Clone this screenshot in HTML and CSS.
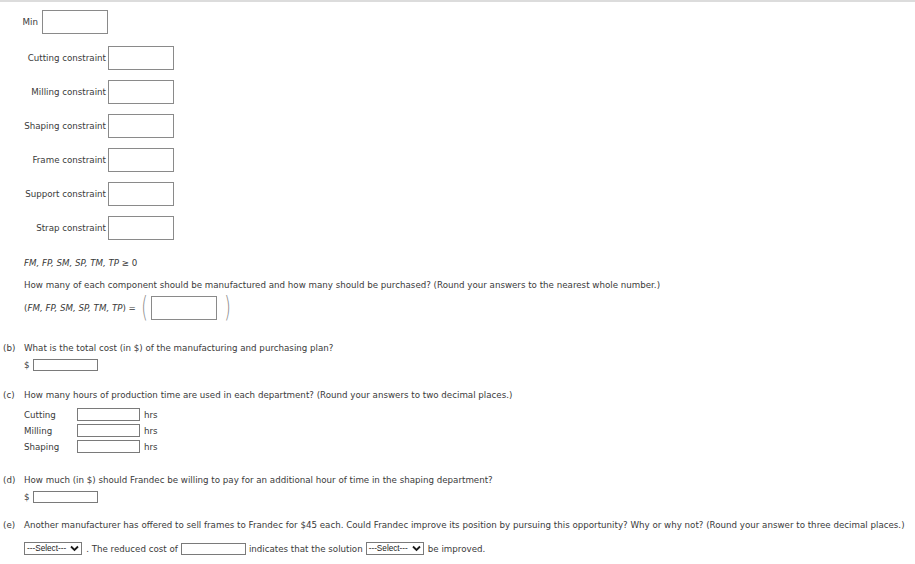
FILE: index.html
```html
<!DOCTYPE html>
<html lang="en">
<head>
  <meta charset="UTF-8">
  <title>Frandec</title>
  <link rel="stylesheet" href="styles.css">
</head>
<body>
  <div class="top-line"></div>

  <div class="model">
    <div class="min-row">
      <span class="min-label">Min</span>
      <input class="box" type="text">
    </div>
    <div class="constraints">
      <label>Cutting constraint</label><input class="box" type="text">
      <label>Milling constraint</label><input class="box" type="text">
      <label>Shaping constraint</label><input class="box" type="text">
      <label>Frame constraint</label><input class="box" type="text">
      <label>Support constraint</label><input class="box" type="text">
      <label>Strap constraint</label><input class="box" type="text">
    </div>
    <p class="line nonneg"><i>FM, FP, SM, SP, TM, TP</i> &ge; 0</p>
    <p class="line">How many of each component should be manufactured and how many should be purchased? (Round your answers to the nearest whole number.)</p>
    <div class="tuple-row">
      <span>(<i>FM, FP, SM, SP, TM, TP</i>) =</span>
      <span class="paren">(</span>
      <input class="box" type="text">
      <span class="paren close">)</span>
    </div>
  </div>

  <div class="part part-b">
    <span class="tag">(b)</span>
    <div class="body">
      <p class="line">What is the total cost (in $) of the manufacturing and purchasing plan?</p>
      <div class="money">$ <input class="small" type="text"></div>
    </div>
  </div>

  <div class="part part-c">
    <span class="tag">(c)</span>
    <div class="body">
      <p class="line">How many hours of production time are used in each department? (Round your answers to two decimal places.)</p>
      <div class="hours">
        <span>Cutting</span><input class="small" type="text"><span>hrs</span>
        <span>Milling</span><input class="small" type="text"><span>hrs</span>
        <span>Shaping</span><input class="small" type="text"><span>hrs</span>
      </div>
    </div>
  </div>

  <div class="part part-d">
    <span class="tag">(d)</span>
    <div class="body">
      <p class="line">How much (in $) should Frandec be willing to pay for an additional hour of time in the shaping department?</p>
      <div class="money">$ <input class="small" type="text"></div>
    </div>
  </div>

  <div class="part part-e">
    <span class="tag">(e)</span>
    <div class="body">
      <p class="line">Another manufacturer has offered to sell frames to Frandec for $45 each. Could Frandec improve its position by pursuing this opportunity? Why or why not? (Round your answer to three decimal places.)</p>
      <div class="answer-row">
        <span class="select">---Select---
          <svg width="9" height="7" viewBox="0 0 9 7"><path d="M1 1.5 L4.5 5 L8 1.5" fill="none" stroke="#1a1a1a" stroke-width="1.8"/></svg>
        </span>
        <span>. The reduced cost of</span>
        <input class="small" type="text">
        <span>indicates that the solution</span>
        <span class="select">---Select---
          <svg width="9" height="7" viewBox="0 0 9 7"><path d="M1 1.5 L4.5 5 L8 1.5" fill="none" stroke="#1a1a1a" stroke-width="1.8"/></svg>
        </span>
        <span>be improved.</span>
      </div>
    </div>
  </div>
</body>
</html>
```

FILE: styles.css
```css
body {
  margin: 0;
  font-family: "DejaVu Sans", Verdana, sans-serif;
  font-size: 8.7px;
  color: #3a3a3a;
  background: #ffffff;
}
p {
  margin: 0;
}
input {
  margin: 0;
  padding: 0;
  box-sizing: border-box;
  background: #ffffff;
}
.top-line {
  height: 2px;
  background-color: #dcdcdc;
}
.line {
  line-height: 12px;
  white-space: nowrap;
}
.box {
  width: 66px;
  height: 24px;
  border: 1px solid #8a8a8a;
}
.small {
  width: 65px;
  height: 12px;
  border: 1px solid #7a7a7a;
}
.model {
  padding: 8px 0 0 24px;
}
.min-row {
  display: flex;
  align-items: center;
  gap: 4px;
  margin-left: -24px;
}
.min-label {
  width: 38px;
  text-align: right;
}
.constraints {
  display: grid;
  grid-template-columns: 82px 66px;
  grid-auto-rows: 24px;
  column-gap: 2px;
  row-gap: 10px;
  align-items: center;
  margin-top: 12px;
}
.constraints label {
  text-align: right;
  white-space: nowrap;
}
.nonneg {
  margin-top: 17px;
}
.nonneg + .line {
  margin-top: 10px;
}
.tuple-row {
  display: flex;
  align-items: center;
  margin-top: 5px;
  white-space: nowrap;
}
.paren {
  font-size: 28px;
  font-weight: 200;
  color: #888888;
  line-height: 24px;
  margin: 0 1px 0 3px;
  transform: scaleX(0.6);
}
.paren.close {
  margin: 0 0 0 5px;
}
.part {
  display: flex;
  padding-left: 3px;
}
.tag {
  width: 21px;
  line-height: 12px;
}
.part-b {
  margin-top: 22px;
}
.part-c {
  margin-top: 18px;
}
.part-d {
  margin-top: 21px;
}
.part-e {
  margin-top: 16px;
}
.money {
  display: flex;
  align-items: center;
  gap: 3px;
  margin-top: 5px;
}
.hours {
  display: grid;
  grid-template-columns: 49px 63px auto;
  grid-auto-rows: 13px;
  row-gap: 3px;
  column-gap: 4px;
  align-items: center;
  margin-top: 7px;
}
.hours .small {
  width: 63px;
  height: 13px;
}
.answer-row {
  display: flex;
  align-items: center;
  gap: 3px;
  margin-top: 11px;
  white-space: nowrap;
}
.select {
  display: inline-flex;
  align-items: center;
  gap: 4px;
  height: 13px;
  padding: 0 2px;
  margin-right: 1px;
  border: 1px solid #7a7a7a;
  font-family: "Liberation Sans", Arial, sans-serif;
  font-size: 8.2px;
  color: #222222;
  box-sizing: border-box;
}
```
